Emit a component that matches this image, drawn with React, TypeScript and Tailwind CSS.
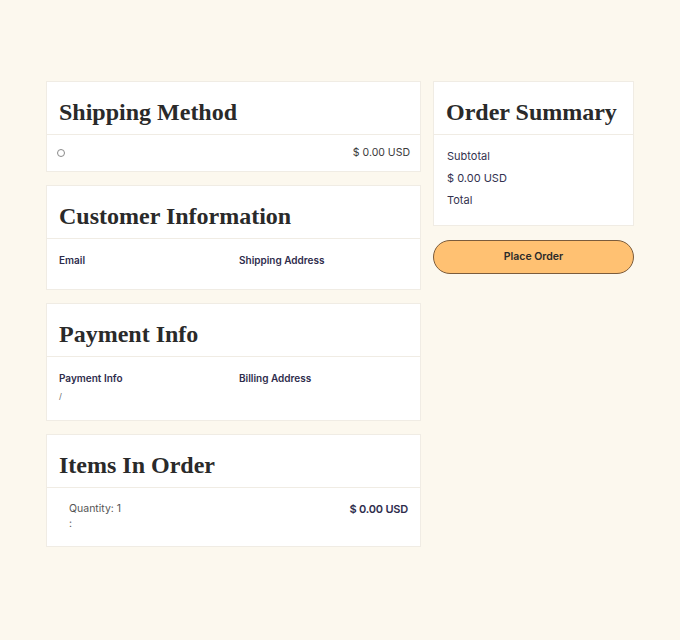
const heading = "font-['Liberation_Serif',serif] font-bold text-[24px] leading-none text-[#2a2a2a] whitespace-nowrap";

function Card({ title, children }: { title: string; children: React.ReactNode }) {
    return (
        <div className="bg-white border border-[#f0ece4]">
            <div className="h-[53px] flex items-end pb-[10px] px-[12px] border-b border-[#f0ece4]">
                <h2 className={heading}>{title}</h2>
            </div>
            {children}
        </div>
    );
}

export default function App() {
    return (
        <div className="min-h-[640px] bg-[#fcf8ee] font-['Inter',sans-serif] text-[#33324f]">
            <div className="w-[588px] mx-auto pt-[81px] flex gap-[12px] items-start">
                <div className="w-[375px] flex flex-col gap-[13px]">
                    <Card title="Shipping Method">
                        <div className="h-[36px] flex items-center justify-between pl-[10px] pr-[10px]">
                            <span className="w-[8px] h-[8px] rounded-full border border-[#8a8a8a]" />
                            <span className="text-[10.5px] text-[#3a3a3a]">$ 0.00 USD</span>
                        </div>
                    </Card>
                    <Card title="Customer Information">
                        <div className="h-[50px] grid grid-cols-[180px_1fr] px-[12px] pt-[14px] text-[10px] font-semibold text-[#2e2c4c]">
                            <div>Email</div>
                            <div>Shipping Address</div>
                        </div>
                    </Card>
                    <Card title="Payment Info">
                        <div className="h-[63px] grid grid-cols-[180px_1fr] px-[12px] pt-[14px] text-[10px] text-[#2e2c4c]">
                            <div>
                                <div className="font-semibold">Payment Info</div>
                                <div className="mt-[4px] text-[8px] text-[#666]">/</div>
                            </div>
                            <div className="font-semibold">Billing Address</div>
                        </div>
                    </Card>
                    <Card title="Items In Order">
                        <div className="h-[58px] flex justify-between pl-[22px] pr-[12px] pt-[13px]">
                            <div className="text-[10.5px] text-[#555]">
                                <div>Quantity: 1</div>
                                <div className="leading-[12px] mt-[1px]">:</div>
                            </div>
                            <div className="text-[11px] font-semibold text-[#2e2c4c] tracking-[-0.2px]">$ 0.00 USD</div>
                        </div>
                    </Card>
                </div>
                <div className="flex-1 flex flex-col gap-[14px]">
                    <Card title="Order Summary">
                        <div className="h-[90px] px-[13px] pt-[14px] text-[11px] text-[#33324f] flex flex-col gap-[8px] leading-[14px]">
                            <div>Subtotal</div>
                            <div>$ 0.00 USD</div>
                            <div>Total</div>
                        </div>
                    </Card>
                    <button className="h-[34px] rounded-full bg-[#ffc172] border border-[#7b5c3c] text-[10.5px] font-semibold text-[#2a2a2a]">
                        Place Order
                    </button>
                </div>
            </div>
        </div>
    );
}
